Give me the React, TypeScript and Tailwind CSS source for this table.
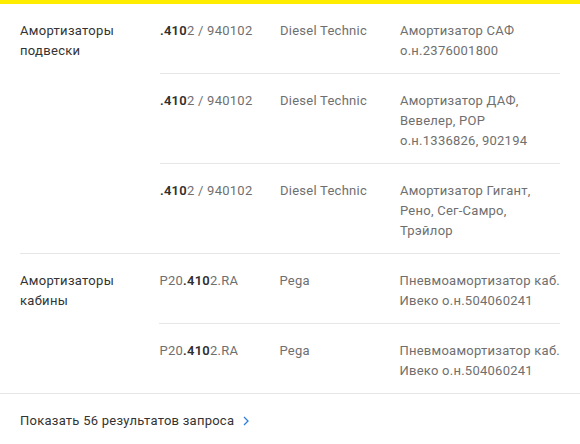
import React from "react";

type Row = {
  code: React.ReactNode;
  brand: string;
  desc: string[];
};

type Group = {
  name: string[];
  rows: Row[];
};

const Code = ({ pre, bold, post }: { pre?: string; bold: string; post: string }) => (
  <span>
    {pre}
    <span className="font-semibold text-[#2f2f2f]">{bold}</span>
    {post}
  </span>
);

const groups: Group[] = [
  {
    name: ["Амортизаторы", "подвески"],
    rows: [
      {
        code: <Code bold=".410" post="2 / 940102" />,
        brand: "Diesel Technic",
        desc: ["Амортизатор САФ", "о.н.2376001800"],
      },
      {
        code: <Code bold=".410" post="2 / 940102" />,
        brand: "Diesel Technic",
        desc: ["Амортизатор ДАФ,", "Вевелер, РОР", "о.н.1336826, 902194"],
      },
      {
        code: <Code bold=".410" post="2 / 940102" />,
        brand: "Diesel Technic",
        desc: ["Амортизатор Гигант,", "Рено, Сег-Самро,", "Трэйлор"],
      },
    ],
  },
  {
    name: ["Амортизаторы", "кабины"],
    rows: [
      {
        code: <Code pre="P20" bold=".410" post="2.RA" />,
        brand: "Pega",
        desc: ["Пневмоамортизатор каб.", "Ивеко о.н.504060241"],
      },
      {
        code: <Code pre="P20" bold=".410" post="2.RA" />,
        brand: "Pega",
        desc: ["Пневмоамортизатор каб.", "Ивеко о.н.504060241"],
      },
    ],
  },
];

export default function App() {
  return (
    <div className="w-[580px] h-[444px] bg-white font-['Roboto',sans-serif] text-[13px] leading-5 tracking-[0.25px]">
      <div className="h-[4px] bg-[#ffed00]" />
      <div className="border-b border-[#e6e6e6]">
        <div className="px-5">
          {groups.map((g, gi) => (
            <div
              key={gi}
              className={
                gi < groups.length - 1 ? "flex border-b border-[#e6e6e6]" : "flex"
              }
            >
              <div className="w-[140px] pt-[17px] text-[#333] tracking-[0.3px]">
                {g.name.map((l) => (
                  <div key={l}>{l}</div>
                ))}
              </div>
              <div className="flex-1">
                {g.rows.map((r, ri) => (
                  <div
                    key={ri}
                    className={
                      ri < g.rows.length - 1
                        ? "flex pt-[17px] pb-3 border-b border-[#e6e6e6] text-[#6f6f6f]"
                        : "flex pt-[17px] pb-3 text-[#6f6f6f]"
                    }
                  >
                    <div className="w-[120px] whitespace-nowrap">{r.code}</div>
                    <div className="w-[120px] whitespace-nowrap">{r.brand}</div>
                    <div className="flex-1 whitespace-nowrap">
                      {r.desc.map((l) => (
                        <div key={l}>{l}</div>
                      ))}
                    </div>
                  </div>
                ))}
              </div>
            </div>
          ))}
        </div>
      </div>
      <div className="px-5 pt-[17px] flex items-center gap-2 text-[#333]">
        <span>Показать 56 результатов запроса</span>
        <svg width="8" height="12" viewBox="0 0 8 12" fill="none" stroke="#2e7fd9" strokeWidth="1.3">
          <path d="M2 2l4 4-4 4" />
        </svg>
      </div>
    </div>
  );
}
